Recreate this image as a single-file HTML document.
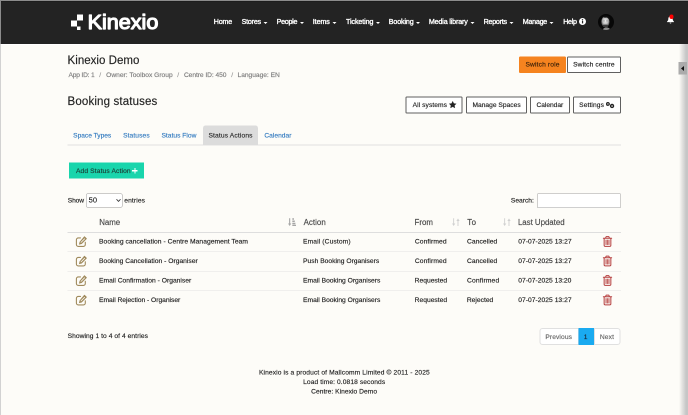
<!DOCTYPE html>
<html lang="en">
<head>
<meta charset="utf-8">
<title>Kinexio Demo - Booking statuses</title>
<style>
*{box-sizing:border-box;margin:0;padding:0}
html,body{width:688px;height:415px;overflow:hidden;background:#fdfcf8}
body{font-family:"Liberation Sans",sans-serif;color:#222}
#stage{position:absolute;left:0;top:0;width:1376px;height:830px;transform:scale(.5);transform-origin:0 0;overflow:hidden;will-change:transform}
.t{position:absolute;white-space:nowrap;line-height:1;display:block}
.b{position:absolute}
svg{position:absolute;overflow:visible}
</style>
</head>
<body>
<div id="stage">
<div class="b" style="left:0px;top:0px;width:1376px;height:88px;background:#232323"></div>
<div class="b" style="left:0px;top:0px;width:1376px;height:2px;background:#8c8c8c"></div>
<div class="b" style="left:0px;top:2px;width:1376px;height:1.2px;background:#181818"></div>
<div class="b" style="left:0px;top:88px;width:1376px;height:2px;background:#fff"></div>
<div class="b" style="left:154px;top:28.8px;width:12px;height:11.8px;background:#fff"></div>
<div class="b" style="left:142px;top:40.6px;width:12px;height:12.2px;background:#fff"></div>
<div class="b" style="left:154px;top:52.8px;width:7.2px;height:6.8px;background:#fff"></div>
<svg style="left:170px;top:10px" width="160" height="64"><text x="5.2" y="47.55" font-family="Liberation Sans, sans-serif" font-size="40.5" fill="#fff" stroke="#fff" stroke-width="2.3" stroke-linejoin="round" textLength="141.47" lengthAdjust="spacingAndGlyphs">Kinexio</text></svg>
<span class="t" style="left:427.61px;top:36.18px;font-size:14.2px;letter-spacing:-0.39px;color:#fff;-webkit-text-stroke:0.7px #fff">Home</span>
<span class="t" style="left:483.31px;top:36.18px;font-size:14.2px;letter-spacing:-0.44px;color:#fff;-webkit-text-stroke:0.7px #fff">Stores</span>
<div class="b" style="left:527.2px;top:43.6px;width:0;height:0;border-left:4px solid transparent;border-right:4px solid transparent;border-top:4px solid #fff"></div>
<span class="t" style="left:553.21px;top:36.18px;font-size:14.2px;letter-spacing:-0.51px;color:#fff;-webkit-text-stroke:0.7px #fff">People</span>
<div class="b" style="left:599.8px;top:43.6px;width:0;height:0;border-left:4px solid transparent;border-right:4px solid transparent;border-top:4px solid #fff"></div>
<span class="t" style="left:625.47px;top:36.18px;font-size:14.2px;letter-spacing:-0.11px;color:#fff;-webkit-text-stroke:0.7px #fff">Items</span>
<div class="b" style="left:664.8px;top:43.6px;width:0;height:0;border-left:4px solid transparent;border-right:4px solid transparent;border-top:4px solid #fff"></div>
<span class="t" style="left:692.07px;top:36.18px;font-size:14.2px;letter-spacing:-0.17px;color:#fff;-webkit-text-stroke:0.7px #fff">Ticketing</span>
<div class="b" style="left:751.6px;top:43.6px;width:0;height:0;border-left:4px solid transparent;border-right:4px solid transparent;border-top:4px solid #fff"></div>
<span class="t" style="left:777.61px;top:36.18px;font-size:14.2px;letter-spacing:-0.26px;color:#fff;-webkit-text-stroke:0.7px #fff">Booking</span>
<div class="b" style="left:832px;top:43.6px;width:0;height:0;border-left:4px solid transparent;border-right:4px solid transparent;border-top:4px solid #fff"></div>
<span class="t" style="left:857.81px;top:36.18px;font-size:14.2px;letter-spacing:-0.29px;color:#fff;-webkit-text-stroke:0.7px #fff">Media library</span>
<div class="b" style="left:941.2px;top:43.6px;width:0;height:0;border-left:4px solid transparent;border-right:4px solid transparent;border-top:4px solid #fff"></div>
<span class="t" style="left:967.21px;top:36.18px;font-size:14.2px;letter-spacing:-0.46px;color:#fff;-webkit-text-stroke:0.7px #fff">Reports</span>
<div class="b" style="left:1019.2px;top:43.6px;width:0;height:0;border-left:4px solid transparent;border-right:4px solid transparent;border-top:4px solid #fff"></div>
<span class="t" style="left:1045.61px;top:36.18px;font-size:14.2px;letter-spacing:-0.49px;color:#fff;-webkit-text-stroke:0.7px #fff">Manage</span>
<div class="b" style="left:1099.4px;top:43.6px;width:0;height:0;border-left:4px solid transparent;border-right:4px solid transparent;border-top:4px solid #fff"></div>
<span class="t" style="left:1126.41px;top:36.18px;font-size:14.2px;letter-spacing:-0.53px;color:#fff;-webkit-text-stroke:0.7px #fff">Help</span>
<svg style="left:1157.8px;top:35.8px" width="14" height="14" viewBox="0 0 14 14"><circle cx="7" cy="7" r="7" fill="#fff"/><rect x="5.9" y="5.8" width="2.4" height="5" fill="#232323"/><circle cx="7" cy="3.6" r="1.4" fill="#232323"/></svg>
<svg style="left:1196px;top:28px" width="32" height="32" viewBox="0 0 32 32"><defs><radialGradient id="fc" cx="50%" cy="42%" r="58%"><stop offset="0" stop-color="#efefef"/><stop offset=".55" stop-color="#bdbdbd"/><stop offset="1" stop-color="#3a3a3a"/></radialGradient><clipPath id="av"><circle cx="16" cy="16" r="16"/></clipPath></defs><circle cx="16" cy="16" r="16" fill="#070707"/><g clip-path="url(#av)"><ellipse cx="17" cy="31" rx="7" ry="4" fill="#8a8a8a"/><ellipse cx="14.800" cy="15.500" rx="8.200" ry="11" fill="url(#fc)"/><path d="M9 5.500c3-3.500 11-4 14.500 1 1.500 3 1 7 0 9-0.500-4-2.500-7-5.500-8.500-3 0.500-6 0.500-9-1.500Z" fill="#101010"/><path d="M9.500 22.500c2-1.800 9-1.800 11 0l-0.500 3c-3 1.500-7 1.500-10 0Z" fill="#3c3c3c"/><path d="M10.500 13.800h3M16.500 13.800h3" stroke="#777" stroke-width="1.200"/></g></svg>
<svg style="left:1332.8px;top:32.4px" width="16" height="16" viewBox="0 0 16 16"><path d="M8 0.5C5 0.5 3.6 3 3.6 6c0 2.6-1.2 4-2.6 5.2V12.3H15V11.2C13.600 10 12.400 8.600 12.400 6 12.400 3 11 0.500 8 0.500Z" fill="#fff"/><path d="M6.2 13.200a1.800 1.800 0 0 0 3.600 0Z" fill="#fff"/></svg>
<div class="b" style="left:1338.8px;top:29.4px;width:8.4px;height:8.4px;border-radius:50%;background:#f00"></div>
<span class="t" style="left:135.11px;top:108.53px;font-size:23px;letter-spacing:0.04px;color:#222;-webkit-text-stroke:0.3px #222">Kinexio Demo</span>
<span class="t" style="left:136.95px;top:142.94px;font-size:13.3px;letter-spacing:-0.37px;color:#7c7c7c;-webkit-text-stroke:0.3px #7c7c7c">App ID: 1</span>
<span class="t" style="left:198.55px;top:142.94px;font-size:13.3px;letter-spacing:0px;color:#999;-webkit-text-stroke:0.3px #999">/</span>
<span class="t" style="left:212.35px;top:142.94px;font-size:13.3px;letter-spacing:0.01px;color:#7c7c7c;-webkit-text-stroke:0.3px #7c7c7c">Owner: Toolbox Group</span>
<span class="t" style="left:354.55px;top:142.94px;font-size:13.3px;letter-spacing:0px;color:#999;-webkit-text-stroke:0.3px #999">/</span>
<span class="t" style="left:367.88px;top:142.94px;font-size:13.3px;letter-spacing:-0.11px;color:#7c7c7c;-webkit-text-stroke:0.3px #7c7c7c">Centre ID: 450</span>
<span class="t" style="left:462.55px;top:142.94px;font-size:13.3px;letter-spacing:0px;color:#999;-webkit-text-stroke:0.3px #999">/</span>
<span class="t" style="left:475.09px;top:142.94px;font-size:13.3px;letter-spacing:-0.05px;color:#7c7c7c;-webkit-text-stroke:0.3px #7c7c7c">Language: EN</span>
<span class="t" style="left:135.11px;top:190.53px;font-size:23px;letter-spacing:0.29px;color:#222;-webkit-text-stroke:0.3px #222">Booking statuses</span>
<div class="b" style="left:1038.4px;top:113px;width:93.2px;height:32.6px;background:#f5831f;border-radius:2.5px"></div>
<span class="t" style="left:1050.95px;top:122.1px;font-size:13.3px;letter-spacing:0.29px;color:#3a210a;-webkit-text-stroke:0.3px #3a210a">Switch role</span>
<div class="b" style="left:1133.8px;top:113px;width:108px;height:32.6px;border:2.1px solid #606060;background:#fff;border-radius:2.5px"></div>
<span class="t" style="left:1146.15px;top:122.1px;font-size:13.3px;letter-spacing:0.26px;color:#222;-webkit-text-stroke:0.3px #222">Switch centre</span>
<div class="b" style="left:811px;top:193px;width:114.4px;height:33.8px;border:2.1px solid #606060;background:#fff;border-radius:2.5px"></div>
<span class="t" style="left:825.35px;top:202.7px;font-size:13.3px;letter-spacing:0.13px;color:#222;-webkit-text-stroke:0.3px #222">All systems</span>
<svg style="left:897.6px;top:202.4px" width="14.800" height="14.800" viewBox="0 0 24 24"><path d="M12 0.800l3.500 7.300 7.900 1-5.800 5.500 1.500 7.900L12 18.700 4.900 22.500l1.500-7.900L0.600 9.100l7.900-1Z" fill="#222" stroke="#222" stroke-width="1" stroke-linejoin="round"/></svg>
<div class="b" style="left:932.2px;top:193px;width:121.4px;height:33.8px;border:2.1px solid #606060;background:#fff;border-radius:2.5px"></div>
<span class="t" style="left:944.89px;top:202.7px;font-size:13.3px;letter-spacing:0.03px;color:#222;-webkit-text-stroke:0.3px #222">Manage Spaces</span>
<div class="b" style="left:1060.4px;top:193px;width:79.2px;height:33.8px;border:2.1px solid #606060;background:#fff;border-radius:2.5px"></div>
<span class="t" style="left:1072.89px;top:202.7px;font-size:13.3px;letter-spacing:-0.05px;color:#222;-webkit-text-stroke:0.3px #222">Calendar</span>
<div class="b" style="left:1146.2px;top:193px;width:95.6px;height:33.8px;border:2.1px solid #606060;background:#fff;border-radius:2.5px"></div>
<span class="t" style="left:1158.35px;top:202.7px;font-size:13.3px;letter-spacing:0.21px;color:#222;-webkit-text-stroke:0.3px #222">Settings</span>
<svg style="left:1212px;top:204px" width="18" height="14" viewBox="0 0 18 14"><circle cx="3.9" cy="3.9" r="2.6" fill="none" stroke="#222" stroke-width="2.6"/><circle cx="12.1" cy="7.9" r="2.9" fill="none" stroke="#222" stroke-width="2.8"/></svg>
<div class="b" style="left:135.2px;top:289.4px;width:1106.6px;height:1.4px;background:#e0e0e0"></div>
<div class="b" style="left:406.4px;top:250.6px;width:109.4px;height:39.8px;background:#dcdcdc;border-radius:5px 5px 0 0"></div>
<span class="t" style="left:146.35px;top:264.1px;font-size:13.3px;letter-spacing:-0.05px;color:#337bc0;-webkit-text-stroke:0.3px #337bc0">Space Types</span>
<span class="t" style="left:246.15px;top:264.1px;font-size:13.3px;letter-spacing:0.2px;color:#337bc0;-webkit-text-stroke:0.3px #337bc0">Statuses</span>
<span class="t" style="left:322.95px;top:264.1px;font-size:13.3px;letter-spacing:0.04px;color:#337bc0;-webkit-text-stroke:0.3px #337bc0">Status Flow</span>
<span class="t" style="left:416.95px;top:264.1px;font-size:13.3px;letter-spacing:0.29px;color:#2a2a2a;-webkit-text-stroke:0.3px #2a2a2a">Status Actions</span>
<span class="t" style="left:528.69px;top:264.1px;font-size:13.3px;letter-spacing:0.03px;color:#337bc0;-webkit-text-stroke:0.3px #337bc0">Calendar</span>
<div class="b" style="left:138.4px;top:325.2px;width:149.4px;height:32.2px;background:#19d5ac"></div>
<span class="t" style="left:151.95px;top:334.9px;font-size:13.3px;letter-spacing:0.27px;color:#1c3b33;-webkit-text-stroke:0.3px #1c3b33">Add Status Action</span>
<div class="b" style="left:264.2px;top:340.2px;width:11px;height:2.4px;background:#fff"></div>
<div class="b" style="left:268.5px;top:336px;width:2.4px;height:10.8px;background:#fff"></div>
<span class="t" style="left:135.55px;top:394.3px;font-size:13.3px;letter-spacing:-0.27px;color:#222;-webkit-text-stroke:0.3px #222">Show</span>
<div class="b" style="left:172.4px;top:386.6px;width:72.8px;height:28.8px;border:1.4px solid #9a9a9a;border-radius:3px;background:#fff"></div>
<span class="t" style="left:177.35px;top:392.47px;font-size:15px;letter-spacing:-0.03px;color:#222;-webkit-text-stroke:0.3px #222">50</span>
<svg style="left:231.8px;top:397.2px" width="10" height="8" viewBox="0 0 10 8"><path d="M1 1.500L5 5.800 9 1.500" fill="none" stroke="#333" stroke-width="1.800"/></svg>
<span class="t" style="left:248.62px;top:394.3px;font-size:13.3px;letter-spacing:0.23px;color:#222;-webkit-text-stroke:0.3px #222">entries</span>
<span class="t" style="left:1021.75px;top:393.9px;font-size:13.3px;letter-spacing:0.01px;color:#222;-webkit-text-stroke:0.3px #222">Search:</span>
<div class="b" style="left:1074.6px;top:386.6px;width:166.8px;height:29px;border:1.5px solid #a0a0a0;background:#fff"></div>
<span class="t" style="left:198.49px;top:436.83px;font-size:15.8px;letter-spacing:-0.14px;color:#4a4a4a;-webkit-text-stroke:0.3px #4a4a4a">Name</span>
<span class="t" style="left:607.15px;top:436.83px;font-size:15.8px;letter-spacing:0.08px;color:#4a4a4a;-webkit-text-stroke:0.3px #4a4a4a">Action</span>
<span class="t" style="left:829.09px;top:436.83px;font-size:15.8px;letter-spacing:-0.03px;color:#4a4a4a;-webkit-text-stroke:0.3px #4a4a4a">From</span>
<span class="t" style="left:934.43px;top:436.83px;font-size:15.8px;letter-spacing:0.98px;color:#4a4a4a;-webkit-text-stroke:0.3px #4a4a4a">To</span>
<span class="t" style="left:1035.89px;top:436.83px;font-size:15.8px;letter-spacing:-0.06px;color:#4a4a4a;-webkit-text-stroke:0.3px #4a4a4a">Last Updated</span>
<svg style="left:576px;top:436.2px" width="17" height="17" viewBox="0 0 17 17"><path d="M3.300 0.500V12" fill="none" stroke="#a6a6a6" stroke-width="2.200"/><path d="M0 11h6.600L3.300 16Z" fill="#a6a6a6"/><rect x="8.600" y="0.500" width="3.400" height="3" fill="#a6a6a6"/><rect x="8.600" y="5" width="5" height="3" fill="#a6a6a6"/><rect x="8.600" y="9.500" width="6.200" height="3" fill="#a6a6a6"/><rect x="8.600" y="13.500" width="7.400" height="2.500" fill="#a6a6a6"/></svg>
<svg style="left:904px;top:436.4px" width="17" height="17" viewBox="0 0 17 17"><path d="M3.300 0.500V12" fill="none" stroke="#d0d0d0" stroke-width="1.800"/><path d="M0 11h6.600L3.300 16Z" fill="#d0d0d0"/><path d="M12 16V5" fill="none" stroke="#d0d0d0" stroke-width="1.800"/><path d="M8.700 6h6.600L12 1Z" fill="#d0d0d0"/></svg>
<svg style="left:1005.8px;top:436.4px" width="17" height="17" viewBox="0 0 17 17"><path d="M3.300 0.500V12" fill="none" stroke="#d0d0d0" stroke-width="1.800"/><path d="M0 11h6.600L3.300 16Z" fill="#d0d0d0"/><path d="M12 16V5" fill="none" stroke="#d0d0d0" stroke-width="1.800"/><path d="M8.700 6h6.600L12 1Z" fill="#d0d0d0"/></svg>
<div class="b" style="left:135.2px;top:464.2px;width:1106.6px;height:1.4px;background:#dedede"></div>
<span class="t" style="left:198.08px;top:476.45px;font-size:13.4px;letter-spacing:0.11px;color:#222;-webkit-text-stroke:0.3px #222">Booking cancellation - Centre Management Team</span>
<span class="t" style="left:606.08px;top:476.45px;font-size:13.4px;letter-spacing:0.22px;color:#222;-webkit-text-stroke:0.3px #222">Email (Custom)</span>
<span class="t" style="left:829.68px;top:476.45px;font-size:13.4px;letter-spacing:0.21px;color:#222;-webkit-text-stroke:0.3px #222">Confirmed</span>
<span class="t" style="left:934.08px;top:476.45px;font-size:13.4px;letter-spacing:0.11px;color:#222;-webkit-text-stroke:0.3px #222">Cancelled</span>
<span class="t" style="left:1036.61px;top:476.45px;font-size:13.4px;letter-spacing:0.05px;color:#222;-webkit-text-stroke:0.3px #222">07-07-2025 13:27</span>
<svg style="left:151.2px;top:472.2px" width="24" height="22" viewBox="0 0 24 22"><path d="M10 3.800H5.600a3.800 3.800 0 0 0-3.800 3.800v9.400a3.800 3.800 0 0 0 3.800 3.800h10.200a3.800 3.800 0 0 0 3.800-3.800v-4.400" fill="none" stroke="#a08a5c" stroke-width="2.200" stroke-linecap="round"/><path d="M18.600 0.900l3.700 3.700a1 1 0 0 1 0 1.400L12.400 15.900l-5.600 1.400 1.400-5.600L17.200 0.900a1 1 0 0 1 1.400 0Z" fill="#a08a5c"/><path d="M11 12.800l7.200-7.200" stroke="#fdfcf8" stroke-width="1.500" stroke-linecap="round"/></svg>
<svg style="left:1205.6px;top:472.2px" width="18" height="22" viewBox="0 0 18 22"><path d="M0.800 4.500H17.200" stroke="#b53e3e" stroke-width="2.200" stroke-linecap="round"/><path d="M5 4L6.400 1.300h5.200L13 4" fill="none" stroke="#b53e3e" stroke-width="1.900" stroke-linejoin="round"/><path d="M2.300 4.800V18.400a2.300 2.300 0 0 0 2.300 2.300h8.800a2.300 2.300 0 0 0 2.300-2.300V4.800" fill="none" stroke="#b53e3e" stroke-width="2"/><rect x="4.700" y="7.600" width="8.600" height="10" fill="#e9c4c0"/><path d="M6 8V17.200M9 8V17.200M12 8V17.200" stroke="#bf5a58" stroke-width="1.700" stroke-linecap="round"/></svg>
<div class="b" style="left:135.2px;top:503px;width:1106.6px;height:1.4px;background:#e2e2e2"></div>
<span class="t" style="left:198.08px;top:515.25px;font-size:13.4px;letter-spacing:0.03px;color:#222;-webkit-text-stroke:0.3px #222">Booking Cancellation - Organiser</span>
<span class="t" style="left:606.08px;top:515.25px;font-size:13.4px;letter-spacing:0.02px;color:#222;-webkit-text-stroke:0.3px #222">Push Booking Organisers</span>
<span class="t" style="left:829.68px;top:515.25px;font-size:13.4px;letter-spacing:0.21px;color:#222;-webkit-text-stroke:0.3px #222">Confirmed</span>
<span class="t" style="left:934.08px;top:515.25px;font-size:13.4px;letter-spacing:0.11px;color:#222;-webkit-text-stroke:0.3px #222">Cancelled</span>
<span class="t" style="left:1036.61px;top:515.25px;font-size:13.4px;letter-spacing:0.05px;color:#222;-webkit-text-stroke:0.3px #222">07-07-2025 13:27</span>
<svg style="left:151.2px;top:511px" width="24" height="22" viewBox="0 0 24 22"><path d="M10 3.800H5.600a3.800 3.800 0 0 0-3.800 3.800v9.400a3.800 3.800 0 0 0 3.800 3.800h10.200a3.800 3.800 0 0 0 3.800-3.800v-4.400" fill="none" stroke="#a08a5c" stroke-width="2.200" stroke-linecap="round"/><path d="M18.600 0.900l3.700 3.700a1 1 0 0 1 0 1.400L12.400 15.900l-5.600 1.400 1.400-5.600L17.200 0.900a1 1 0 0 1 1.400 0Z" fill="#a08a5c"/><path d="M11 12.800l7.200-7.200" stroke="#fdfcf8" stroke-width="1.500" stroke-linecap="round"/></svg>
<svg style="left:1205.6px;top:511px" width="18" height="22" viewBox="0 0 18 22"><path d="M0.800 4.500H17.200" stroke="#b53e3e" stroke-width="2.200" stroke-linecap="round"/><path d="M5 4L6.400 1.300h5.200L13 4" fill="none" stroke="#b53e3e" stroke-width="1.900" stroke-linejoin="round"/><path d="M2.300 4.800V18.400a2.300 2.300 0 0 0 2.300 2.300h8.800a2.300 2.300 0 0 0 2.300-2.300V4.800" fill="none" stroke="#b53e3e" stroke-width="2"/><rect x="4.700" y="7.600" width="8.600" height="10" fill="#e9c4c0"/><path d="M6 8V17.200M9 8V17.200M12 8V17.200" stroke="#bf5a58" stroke-width="1.700" stroke-linecap="round"/></svg>
<div class="b" style="left:135.2px;top:542px;width:1106.6px;height:1.4px;background:#e2e2e2"></div>
<span class="t" style="left:198.08px;top:554.25px;font-size:13.4px;letter-spacing:0.02px;color:#222;-webkit-text-stroke:0.3px #222">Email Confirmation - Organiser</span>
<span class="t" style="left:606.08px;top:554.25px;font-size:13.4px;letter-spacing:-0.01px;color:#222;-webkit-text-stroke:0.3px #222">Email Booking Organisers</span>
<span class="t" style="left:829.28px;top:554.25px;font-size:13.4px;letter-spacing:0.03px;color:#222;-webkit-text-stroke:0.3px #222">Requested</span>
<span class="t" style="left:934.08px;top:554.25px;font-size:13.4px;letter-spacing:0.31px;color:#222;-webkit-text-stroke:0.3px #222">Confirmed</span>
<span class="t" style="left:1036.61px;top:554.25px;font-size:13.4px;letter-spacing:0.03px;color:#222;-webkit-text-stroke:0.3px #222">07-07-2025 13:20</span>
<svg style="left:151.2px;top:550px" width="24" height="22" viewBox="0 0 24 22"><path d="M10 3.800H5.600a3.800 3.800 0 0 0-3.800 3.800v9.400a3.800 3.800 0 0 0 3.800 3.800h10.200a3.800 3.800 0 0 0 3.800-3.800v-4.400" fill="none" stroke="#a08a5c" stroke-width="2.200" stroke-linecap="round"/><path d="M18.600 0.900l3.700 3.700a1 1 0 0 1 0 1.400L12.400 15.900l-5.600 1.400 1.400-5.600L17.200 0.900a1 1 0 0 1 1.400 0Z" fill="#a08a5c"/><path d="M11 12.800l7.200-7.200" stroke="#fdfcf8" stroke-width="1.500" stroke-linecap="round"/></svg>
<svg style="left:1205.6px;top:550px" width="18" height="22" viewBox="0 0 18 22"><path d="M0.800 4.500H17.200" stroke="#b53e3e" stroke-width="2.200" stroke-linecap="round"/><path d="M5 4L6.400 1.300h5.200L13 4" fill="none" stroke="#b53e3e" stroke-width="1.900" stroke-linejoin="round"/><path d="M2.300 4.800V18.400a2.300 2.300 0 0 0 2.300 2.300h8.800a2.300 2.300 0 0 0 2.300-2.300V4.800" fill="none" stroke="#b53e3e" stroke-width="2"/><rect x="4.700" y="7.600" width="8.600" height="10" fill="#e9c4c0"/><path d="M6 8V17.200M9 8V17.200M12 8V17.200" stroke="#bf5a58" stroke-width="1.700" stroke-linecap="round"/></svg>
<div class="b" style="left:135.2px;top:581px;width:1106.6px;height:1.4px;background:#e2e2e2"></div>
<span class="t" style="left:198.08px;top:593.25px;font-size:13.4px;letter-spacing:-0.05px;color:#222;-webkit-text-stroke:0.3px #222">Email Rejection - Organiser</span>
<span class="t" style="left:606.08px;top:593.25px;font-size:13.4px;letter-spacing:-0.01px;color:#222;-webkit-text-stroke:0.3px #222">Email Booking Organisers</span>
<span class="t" style="left:829.28px;top:593.25px;font-size:13.4px;letter-spacing:0.03px;color:#222;-webkit-text-stroke:0.3px #222">Requested</span>
<span class="t" style="left:933.68px;top:593.25px;font-size:13.4px;letter-spacing:0px;color:#222;-webkit-text-stroke:0.3px #222">Rejected</span>
<span class="t" style="left:1036.61px;top:593.25px;font-size:13.4px;letter-spacing:0.05px;color:#222;-webkit-text-stroke:0.3px #222">07-07-2025 13:27</span>
<svg style="left:151.2px;top:589px" width="24" height="22" viewBox="0 0 24 22"><path d="M10 3.800H5.600a3.800 3.800 0 0 0-3.800 3.800v9.400a3.800 3.800 0 0 0 3.800 3.800h10.200a3.800 3.800 0 0 0 3.800-3.800v-4.400" fill="none" stroke="#a08a5c" stroke-width="2.200" stroke-linecap="round"/><path d="M18.600 0.900l3.700 3.700a1 1 0 0 1 0 1.400L12.400 15.900l-5.600 1.400 1.400-5.600L17.200 0.900a1 1 0 0 1 1.400 0Z" fill="#a08a5c"/><path d="M11 12.800l7.200-7.200" stroke="#fdfcf8" stroke-width="1.500" stroke-linecap="round"/></svg>
<svg style="left:1205.6px;top:589px" width="18" height="22" viewBox="0 0 18 22"><path d="M0.800 4.500H17.200" stroke="#b53e3e" stroke-width="2.200" stroke-linecap="round"/><path d="M5 4L6.400 1.300h5.200L13 4" fill="none" stroke="#b53e3e" stroke-width="1.900" stroke-linejoin="round"/><path d="M2.300 4.800V18.400a2.300 2.300 0 0 0 2.300 2.300h8.800a2.300 2.300 0 0 0 2.300-2.300V4.800" fill="none" stroke="#b53e3e" stroke-width="2"/><rect x="4.700" y="7.600" width="8.600" height="10" fill="#e9c4c0"/><path d="M6 8V17.200M9 8V17.200M12 8V17.200" stroke="#bf5a58" stroke-width="1.700" stroke-linecap="round"/></svg>
<span class="t" style="left:135.15px;top:664.7px;font-size:13.3px;letter-spacing:0.13px;color:#222;-webkit-text-stroke:0.3px #222">Showing 1 to 4 of 4 entries</span>
<div class="b" style="left:1078.6px;top:656.4px;width:79px;height:33.6px;border:2px solid #e0e0e0;background:#fff;border-radius:6px 0 0 6px"></div>
<div class="b" style="left:1188px;top:656.4px;width:53.2px;height:33.6px;border:2px solid #e0e0e0;background:#fff;border-radius:0 6px 6px 0"></div>
<div class="b" style="left:1156.6px;top:656.4px;width:31.4px;height:33.6px;background:#1aaaf0"></div>
<span class="t" style="left:1090.69px;top:666.9px;font-size:13.3px;letter-spacing:0.21px;color:#666;-webkit-text-stroke:0.3px #666">Previous</span>
<span class="t" style="left:1167.55px;top:666.9px;font-size:13.3px;letter-spacing:0px;color:#1a2a3a;-webkit-text-stroke:0.3px #1a2a3a">1</span>
<span class="t" style="left:1199.69px;top:666.9px;font-size:13.3px;letter-spacing:0.3px;color:#666;-webkit-text-stroke:0.3px #666">Next</span>
<span class="t" style="left:517.89px;top:738.3px;font-size:13.3px;letter-spacing:0.24px;color:#222;-webkit-text-stroke:0.3px #222">Kinexio is a product of Mallcomm Limited © 2011 - 2025</span>
<span class="t" style="left:606.29px;top:757.1px;font-size:13.3px;letter-spacing:0.18px;color:#222;-webkit-text-stroke:0.3px #222">Load time: 0.0818 seconds</span>
<span class="t" style="left:622.28px;top:775.7px;font-size:13.3px;letter-spacing:0.09px;color:#222;-webkit-text-stroke:0.3px #222">Centre: Kinexio Demo</span>
<div class="b" style="left:1358px;top:88px;width:18px;height:742px;background:linear-gradient(to right,rgba(200,200,200,0),#c6c6c6 78%,#c6c6c6)"></div>
<div class="b" style="left:1356.6px;top:124.2px;width:17px;height:24.8px;background:#ababab"></div>
<div class="b" style="left:1361.6px;top:131.6px;width:0;height:0;border-top:5.200px solid transparent;border-bottom:5.200px solid transparent;border-right:6.600px solid #111"></div>
<div class="b" style="left:0px;top:0px;width:2.2px;height:88px;background:#8c8c8c"></div>
<div class="b" style="left:0px;top:88px;width:2.2px;height:742px;background:#d2d2d2"></div>
</div>
</body>
</html>
